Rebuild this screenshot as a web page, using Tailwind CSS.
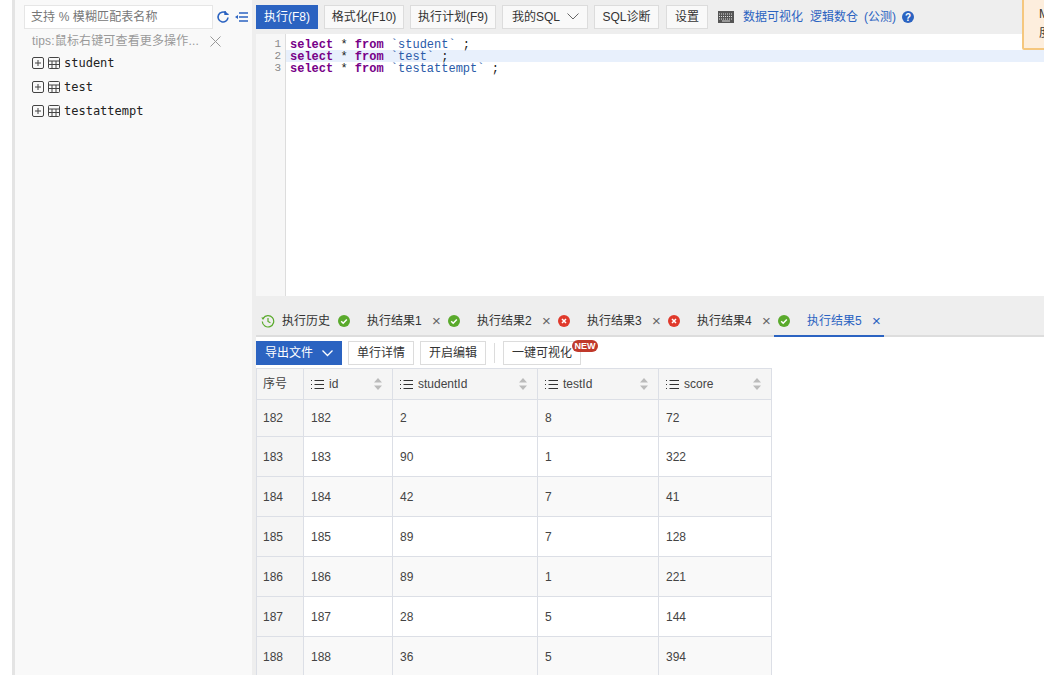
<!DOCTYPE html>
<html lang="zh">
<head>
<meta charset="UTF-8">
<title>SQL</title>
<script src="https://cdn.jsdelivr.net/npm/@tailwindcss/browser@4"></script>
</head>
<body class="bg-white overflow-hidden font-['Liberation_Sans','Noto_Sans_CJK_SC',sans-serif] text-[12px] text-[#333]">
<div class="flex h-[675px] w-[1044px] overflow-hidden relative">
  <!-- left edge -->
  <div class="w-[12px] shrink-0 bg-white"></div>
  <div class="w-[3px] shrink-0 bg-[#e4e4e4]"></div>

  <!-- sidebar -->
  <aside class="w-[237px] shrink-0 bg-[#f9f9f9] pt-[5px] pl-[9px]">
    <div class="flex items-center">
      <div class="w-[189px] h-[24px] border border-[#e6e6e6] bg-white pl-[6px] leading-[22px] text-[#777] tracking-[0.1px]">支持 % 模糊匹配表名称</div>
      <svg class="ml-[3px]" width="14" height="14" viewBox="0 0 14 14" fill="none" stroke="#2b63c1" stroke-width="1.6"><path d="M12 7.5A5 5 0 1 1 10 3"/><path d="M9 1v3.4h3.6" stroke-width="1.4" fill="#2b63c1"/></svg>
      <svg class="ml-[5px]" width="13" height="12" viewBox="0 0 13 12" fill="none" stroke="#2b63c1" stroke-width="1.3"><path d="M4 2h9M4 6h9M4 10h9"/><path d="M3 4v4L0 6z" fill="#2b63c1" stroke="none"/></svg>
    </div>
    <div class="flex items-center h-[16px] mt-[4px] pl-[8px] text-[#999]">
      <span class="w-[169px] whitespace-nowrap tracking-[0.15px]">tips:鼠标右键可查看更多操作...</span>
      <svg class="ml-[9px]" width="11" height="11" viewBox="0 0 11 11" stroke="#999" stroke-width="1"><path d="M.5.5l10 10M10.5.5l-10 10"/></svg>
    </div>
    <div class="mt-[2px] pl-[8px] font-['DejaVu_Sans_Mono',monospace] text-[12px] text-[#222]">
      <div class="flex items-center h-[24px]">
        <svg width="12" height="12" viewBox="0 0 12 12" fill="none" stroke="#444"><rect x=".5" y=".5" width="11" height="11" rx="1.5"/><path d="M3 6h6M6 3v6"/></svg>
        <svg class="ml-[4px]" width="12" height="12" viewBox="0 0 12 12" fill="none" stroke="#444"><rect x=".5" y=".5" width="11" height="11" rx="1"/><path d="M.5 4h11M.5 7.5h11M4 4v7.5M8 4v7.5"/></svg>
        <span class="ml-[4px]">student</span>
      </div>
      <div class="flex items-center h-[24px]">
        <svg width="12" height="12" viewBox="0 0 12 12" fill="none" stroke="#444"><rect x=".5" y=".5" width="11" height="11" rx="1.5"/><path d="M3 6h6M6 3v6"/></svg>
        <svg class="ml-[4px]" width="12" height="12" viewBox="0 0 12 12" fill="none" stroke="#444"><rect x=".5" y=".5" width="11" height="11" rx="1"/><path d="M.5 4h11M.5 7.5h11M4 4v7.5M8 4v7.5"/></svg>
        <span class="ml-[4px]">test</span>
      </div>
      <div class="flex items-center h-[24px]">
        <svg width="12" height="12" viewBox="0 0 12 12" fill="none" stroke="#444"><rect x=".5" y=".5" width="11" height="11" rx="1.5"/><path d="M3 6h6M6 3v6"/></svg>
        <svg class="ml-[4px]" width="12" height="12" viewBox="0 0 12 12" fill="none" stroke="#444"><rect x=".5" y=".5" width="11" height="11" rx="1"/><path d="M.5 4h11M.5 7.5h11M4 4v7.5M8 4v7.5"/></svg>
        <span class="ml-[4px]">testattempt</span>
      </div>
    </div>
  </aside>

  <div class="w-[4px] shrink-0 bg-[#eeeeee]"></div>

  <!-- main -->
  <main class="w-[788px] shrink-0 flex flex-col">
    <div class="h-[34px] bg-[#eeeeee] flex items-center pb-[5px] pt-[4px] whitespace-nowrap">
      <div class="w-[62px] h-[24px] bg-[#2b63c1] text-white flex items-center justify-center">执行(F8)</div>
      <div class="ml-[6px] w-[80px] h-[24px] bg-[#f9f9f9] border border-[#dcdcdc] flex items-center justify-center">格式化(F10)</div>
      <div class="ml-[6px] w-[86px] h-[24px] bg-[#f9f9f9] border border-[#dcdcdc] flex items-center justify-center">执行计划(F9)</div>
      <div class="ml-[6px] w-[86px] h-[24px] bg-[#f9f9f9] border border-[#dcdcdc] flex items-center pl-[9px]">我的SQL
        <svg class="ml-[7px]" width="12" height="7" viewBox="0 0 12 7" fill="none" stroke="#666"><path d="M.5.5L6 6l5.5-5.5"/></svg>
      </div>
      <div class="ml-[6px] w-[65px] h-[24px] bg-[#f9f9f9] border border-[#dcdcdc] flex items-center justify-center">SQL诊断</div>
      <div class="ml-[7px] w-[42px] h-[24px] bg-[#f9f9f9] border border-[#dcdcdc] flex items-center justify-center">设置</div>
      <svg class="ml-[10px]" width="16" height="12" viewBox="0 0 16 12"><rect width="16" height="12" fill="#555"/><path d="M1 3h14M1 5.5h14M1 8h14" stroke="#ddd" stroke-dasharray="1 1"/><path d="M4 10h8" stroke="#ddd"/></svg>
      <a class="ml-[9px] text-[#2b63c1]">数据可视化</a>
      <a class="ml-[7px] text-[#2b63c1]">逻辑数仓</a>
      <a class="ml-[6px] text-[#2b63c1]">(公测)</a>
      <svg class="ml-[6px]" width="12" height="12" viewBox="0 0 12 12"><circle cx="6" cy="6" r="6" fill="#2b63c1"/><text x="6" y="9.5" text-anchor="middle" font-size="10" font-weight="700" fill="#fff" font-family="Liberation Sans">?</text></svg>
    </div>

    <div class="h-[262px] bg-white flex font-['Liberation_Mono',monospace] text-[12px] leading-[12px] shrink-0">
      <div class="w-[30px] bg-[#f7f7f7] border-r border-[#dddddd] pt-[4px] pr-[4px] text-right text-[#888] text-[11px]">
        <div>1</div><div>2</div><div>3</div>
      </div>
      <div class="flex-1 pt-[4px] text-[#222]">
        <div class="pl-[4px] pt-[1px] h-[12px] whitespace-pre"><span class="font-bold text-[#708]">select</span> * <span class="font-bold text-[#708]">from</span> <span class="text-[#2a5aa8]">`student`</span> ;</div>
        <div class="pl-[4px] pt-[1px] h-[12px] whitespace-pre bg-[#e8f0fc]"><span class="font-bold text-[#708]">select</span> * <span class="font-bold text-[#708]">from</span> <span class="text-[#2a5aa8]">`test`</span> ;</div>
        <div class="pl-[4px] pt-[1px] h-[12px] whitespace-pre"><span class="font-bold text-[#708]">select</span> * <span class="font-bold text-[#708]">from</span> <span class="text-[#2a5aa8]">`testattempt`</span> ;</div>
      </div>
    </div>

    <!-- tabs -->
    <div class="h-[41px] bg-[#eeeeee] border-b-2 border-[#dddddd] flex items-center pt-[10px] whitespace-nowrap shrink-0 relative">
      <svg class="ml-[5px]" width="14" height="14" viewBox="0 0 14 14" fill="none" stroke="#5aaa2c" stroke-width="1.2"><path d="M2.2 4.2A5.7 5.7 0 1 1 1.3 7.5"/><path d="M7 4v3.4l2.4 1.4"/><path d="M.3 3.5h3.4L2 6z" fill="#5aaa2c" stroke="none"/></svg>
      <span class="ml-[7px] w-[56px]">执行历史</span>
      <svg width="12" height="12" viewBox="0 0 12 12"><circle cx="6" cy="6" r="6" fill="#5aaa2c"/><path d="M3.2 6.2l2 2 3.6-3.8" fill="none" stroke="#fff" stroke-width="1.5"/></svg>
      <span class="ml-[17px] w-[55px]">执行结果1</span>
      <span class="ml-[10px] w-[8px] text-center text-[#666] text-[15px] leading-none">×</span>
      <svg class="ml-[8px]" width="12" height="12" viewBox="0 0 12 12"><circle cx="6" cy="6" r="6" fill="#5aaa2c"/><path d="M3.2 6.2l2 2 3.6-3.8" fill="none" stroke="#fff" stroke-width="1.5"/></svg>
      <span class="ml-[17px] w-[55px]">执行结果2</span>
      <span class="ml-[10px] w-[8px] text-center text-[#666] text-[15px] leading-none">×</span>
      <svg class="ml-[8px]" width="12" height="12" viewBox="0 0 12 12"><circle cx="6" cy="6" r="6" fill="#e0392b"/><path d="M4 4l4 4M8 4l-4 4" fill="none" stroke="#fff" stroke-width="1.5"/></svg>
      <span class="ml-[17px] w-[55px]">执行结果3</span>
      <span class="ml-[10px] w-[8px] text-center text-[#666] text-[15px] leading-none">×</span>
      <svg class="ml-[8px]" width="12" height="12" viewBox="0 0 12 12"><circle cx="6" cy="6" r="6" fill="#e0392b"/><path d="M4 4l4 4M8 4l-4 4" fill="none" stroke="#fff" stroke-width="1.5"/></svg>
      <span class="ml-[17px] w-[55px]">执行结果4</span>
      <span class="ml-[10px] w-[8px] text-center text-[#666] text-[15px] leading-none">×</span>
      <svg class="ml-[8px]" width="12" height="12" viewBox="0 0 12 12"><circle cx="6" cy="6" r="6" fill="#5aaa2c"/><path d="M3.2 6.2l2 2 3.6-3.8" fill="none" stroke="#fff" stroke-width="1.5"/></svg>
      <span class="ml-[17px] w-[55px] text-[#2b63c1]">执行结果5</span>
      <span class="ml-[10px] w-[8px] text-center text-[#2b63c1] text-[15px] leading-none">×</span>
      <div class="absolute left-[518px] bottom-[-2px] w-[110px] h-[2px] bg-[#2b63c1]"></div>
    </div>

    <!-- result toolbar -->
    <div class="h-[31px] flex items-start pt-[4px] whitespace-nowrap shrink-0">
      <div class="w-[86px] h-[24px] bg-[#2b63c1] text-white flex items-center pl-[9px]">导出文件
        <svg class="ml-[9px]" width="11" height="7" viewBox="0 0 11 7" fill="none" stroke="#fff" stroke-width="1.3"><path d="M.5.5l5 5 5-5"/></svg>
      </div>
      <div class="ml-[6px] w-[66px] h-[24px] bg-white border border-[#dcdcdc] flex items-center justify-center">单行详情</div>
      <div class="ml-[6px] w-[66px] h-[24px] bg-white border border-[#dcdcdc] flex items-center justify-center">开启编辑</div>
      <div class="ml-[8px] mt-[2px] w-px h-[20px] bg-[#dcdcdc]"></div>
      <div class="relative ml-[8px] w-[78px] h-[24px] bg-white border border-[#dcdcdc] flex items-center justify-center">一键可视化
        <span class="absolute right-[-18px] top-[-2px] w-[26px] h-[12px] text-center rounded-full bg-[#c0392b] text-white text-[9px] font-bold leading-[12px]">NEW</span>
      </div>
    </div>

    <!-- table -->
    <div class="flex-1 overflow-hidden">
      <table class="border-collapse table-fixed w-[515px] text-[#444] [&_tr:not(:first-child)_td]:pt-[1px]">
        <colgroup><col class="w-[47px]"><col class="w-[89px]"><col class="w-[145px]"><col class="w-[121px]"><col class="w-[113px]"></colgroup>
        <thead>
          <tr class="h-[31px] bg-[#f5f5f5] text-left">
            <th class="font-normal border border-[#dcdfe6] pl-[6px]">序号</th>
            <th class="font-normal border border-[#dcdfe6] pl-[7px]"><div class="flex items-center"><svg width="13" height="11" viewBox="0 0 13 11" fill="none" stroke="#333"><path d="M3.5 1.5h9.5M3.5 5.5h9.5M3.5 9.5h9.5"/><path d="M0 1.5h2M0 5.5h2M0 9.5h2" stroke-dasharray="1 1"/></svg><span class="ml-[5px]">id</span><svg class="ml-auto mr-[10px]" width="8" height="12" viewBox="0 0 8 12" fill="#bbb"><path d="M4 0l4 4.5H0zM4 12L0 7.5h8z"/></svg></div></th>
            <th class="font-normal border border-[#dcdfe6] pl-[7px]"><div class="flex items-center"><svg width="13" height="11" viewBox="0 0 13 11" fill="none" stroke="#333"><path d="M3.5 1.5h9.5M3.5 5.5h9.5M3.5 9.5h9.5"/><path d="M0 1.5h2M0 5.5h2M0 9.5h2" stroke-dasharray="1 1"/></svg><span class="ml-[5px]">studentId</span><svg class="ml-auto mr-[10px]" width="8" height="12" viewBox="0 0 8 12" fill="#bbb"><path d="M4 0l4 4.5H0zM4 12L0 7.5h8z"/></svg></div></th>
            <th class="font-normal border border-[#dcdfe6] pl-[7px]"><div class="flex items-center"><svg width="13" height="11" viewBox="0 0 13 11" fill="none" stroke="#333"><path d="M3.5 1.5h9.5M3.5 5.5h9.5M3.5 9.5h9.5"/><path d="M0 1.5h2M0 5.5h2M0 9.5h2" stroke-dasharray="1 1"/></svg><span class="ml-[5px]">testId</span><svg class="ml-auto mr-[10px]" width="8" height="12" viewBox="0 0 8 12" fill="#bbb"><path d="M4 0l4 4.5H0zM4 12L0 7.5h8z"/></svg></div></th>
            <th class="font-normal border border-[#dcdfe6] pl-[7px]"><div class="flex items-center"><svg width="13" height="11" viewBox="0 0 13 11" fill="none" stroke="#333"><path d="M3.5 1.5h9.5M3.5 5.5h9.5M3.5 9.5h9.5"/><path d="M0 1.5h2M0 5.5h2M0 9.5h2" stroke-dasharray="1 1"/></svg><span class="ml-[5px]">score</span><svg class="ml-auto mr-[10px]" width="8" height="12" viewBox="0 0 8 12" fill="#bbb"><path d="M4 0l4 4.5H0zM4 12L0 7.5h8z"/></svg></div></th>
          </tr>
        </thead>
        <tbody>
          <tr class="h-[37px] bg-[#f9f9f9]"><td class="border border-[#dcdfe6] pl-[6px] bg-[#f5f5f5]">182</td><td class="border border-[#dcdfe6] pl-[7px]">182</td><td class="border border-[#dcdfe6] pl-[7px]">2</td><td class="border border-[#dcdfe6] pl-[7px]">8</td><td class="border border-[#dcdfe6] pl-[7px]">72</td></tr>
          <tr class="h-[40px]"><td class="border border-[#dcdfe6] pl-[6px] bg-[#f5f5f5]">183</td><td class="border border-[#dcdfe6] pl-[7px]">183</td><td class="border border-[#dcdfe6] pl-[7px]">90</td><td class="border border-[#dcdfe6] pl-[7px]">1</td><td class="border border-[#dcdfe6] pl-[7px]">322</td></tr>
          <tr class="h-[40px] bg-[#f9f9f9]"><td class="border border-[#dcdfe6] pl-[6px] bg-[#f5f5f5]">184</td><td class="border border-[#dcdfe6] pl-[7px]">184</td><td class="border border-[#dcdfe6] pl-[7px]">42</td><td class="border border-[#dcdfe6] pl-[7px]">7</td><td class="border border-[#dcdfe6] pl-[7px]">41</td></tr>
          <tr class="h-[40px]"><td class="border border-[#dcdfe6] pl-[6px] bg-[#f5f5f5]">185</td><td class="border border-[#dcdfe6] pl-[7px]">185</td><td class="border border-[#dcdfe6] pl-[7px]">89</td><td class="border border-[#dcdfe6] pl-[7px]">7</td><td class="border border-[#dcdfe6] pl-[7px]">128</td></tr>
          <tr class="h-[40px] bg-[#f9f9f9]"><td class="border border-[#dcdfe6] pl-[6px] bg-[#f5f5f5]">186</td><td class="border border-[#dcdfe6] pl-[7px]">186</td><td class="border border-[#dcdfe6] pl-[7px]">89</td><td class="border border-[#dcdfe6] pl-[7px]">1</td><td class="border border-[#dcdfe6] pl-[7px]">221</td></tr>
          <tr class="h-[40px]"><td class="border border-[#dcdfe6] pl-[6px] bg-[#f5f5f5]">187</td><td class="border border-[#dcdfe6] pl-[7px]">187</td><td class="border border-[#dcdfe6] pl-[7px]">28</td><td class="border border-[#dcdfe6] pl-[7px]">5</td><td class="border border-[#dcdfe6] pl-[7px]">144</td></tr>
          <tr class="h-[40px] bg-[#f9f9f9]"><td class="border border-[#dcdfe6] pl-[6px] bg-[#f5f5f5]">188</td><td class="border border-[#dcdfe6] pl-[7px]">188</td><td class="border border-[#dcdfe6] pl-[7px]">36</td><td class="border border-[#dcdfe6] pl-[7px]">5</td><td class="border border-[#dcdfe6] pl-[7px]">394</td></tr>
        </tbody>
      </table>
    </div>
  </main>

  <!-- notice cut off at the window edge -->
  <div class="absolute left-[1022px] top-[-2px] w-[60px] h-[52px] bg-[#fdeedd] border-2 border-[#f5c77e] rounded-[2px] pl-[15px] pt-[5px] text-[#333] leading-[19px] whitespace-nowrap">M<br>度</div>
</div>
</body>
</html>
